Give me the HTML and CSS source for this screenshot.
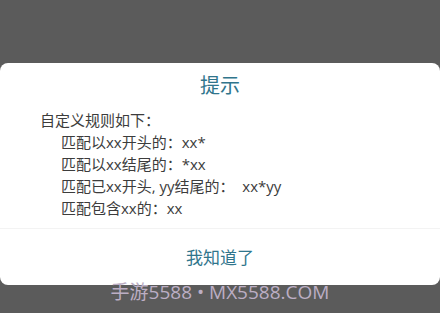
FILE: index.html
```html
<!DOCTYPE html>
<html lang="zh">
  <head>
    <meta charset="UTF-8" />
    <meta name="viewport" content="width=device-width, initial-scale=1.0" />
    <title>提示</title>
    <link rel="stylesheet" href="styles.css">
  </head>
  <body>
    <div class="dialog">
      <h2 class="title">提示</h2>
      <div class="content">
        <div class="line">自定义规则如下：</div>
        <div class="line indent">匹配以xx开头的：xx*</div>
        <div class="line indent">匹配以xx结尾的：*xx</div>
        <div class="line indent">匹配已xx开头, yy结尾的：  xx*yy</div>
        <div class="line indent">匹配包含xx的：xx</div>
      </div>
      <div class="actions">
        <button class="ok-btn">我知道了</button>
      </div>
    </div>
    <div class="watermark">手游5588 • MX5588.COM</div>
  </body>
</html>
```

FILE: styles.css
```css
body {
  font-family: "Open Sans", "Noto Sans CJK SC", sans-serif;
  background-color: #5b5b5b;
  margin: 0;
  padding: 0;
  height: 313px;
  overflow: hidden;
  position: relative;
}
.dialog {
  margin-top: 63px;
  height: 222px;
  background-color: #fff;
  border-radius: 8px;
  display: flex;
  flex-direction: column;
}
.title {
  margin: 0;
  padding-top: 10px;
  height: 36px;
  line-height: 26px;
  font-size: 20px;
  font-weight: normal;
  color: #30758c;
  text-align: center;
}
.content {
  padding: 0 40px;
  height: 119px;
  color: #3c3c3c;
  font-size: 15px;
}
.line {
  height: 22px;
  line-height: 22px;
  white-space: pre;
}
.indent {
  padding-left: 21px;
}
.actions {
  flex: 1;
  border-top: 1px solid #f3f3f3;
  display: flex;
  justify-content: center;
  align-items: center;
}
.ok-btn {
  background: none;
  border: none;
  padding: 0 0 2px;
  font-family: inherit;
  font-size: 17px;
  color: #30758c;
  cursor: pointer;
}
.watermark {
  position: absolute;
  left: 0;
  right: 0;
  top: 280px;
  text-align: center;
  font-size: 19px;
  line-height: 24px;
  color: #bcaec4;
}
```
